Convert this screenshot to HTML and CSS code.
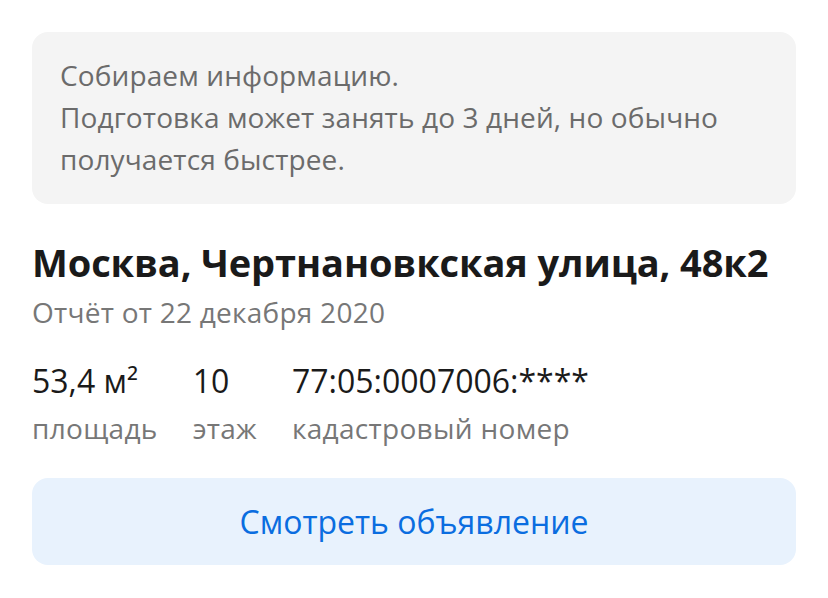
FILE: index.html
```html
<!DOCTYPE html>
<html lang="ru">
<head>
<meta charset="utf-8">
<link rel="stylesheet" href="styles.css">
</head>
<body>
<div class="page">
  <div class="notice">
    <p>Собираем информацию.<br>Подготовка может занять до 3 дней, но обычно получается быстрее.</p>
  </div>
  <h1 class="title">Москва, Чертнановкская улица, 48к2</h1>
  <div class="date">Отчёт от 22 декабря 2020</div>
  <div class="stats">
    <div class="stat"><div class="value">53,4 м²</div><div class="label">площадь</div></div>
    <div class="stat"><div class="value">10</div><div class="label">этаж</div></div>
    <div class="stat"><div class="value">77:05:0007006:****</div><div class="label">кадастровый номер</div></div>
  </div>
  <button class="btn">Смотреть объявление</button>
</div>
</body>
</html>
```
FILE: styles.css
```css
* { box-sizing: border-box; }
html, body { margin: 0; padding: 0; background: #fff; }
body { font-family: "Open Sans", "Noto Sans", sans-serif; }
.page { padding: 32px; width: 828px; }
.notice {
  background: #f4f4f4;
  border-radius: 16px;
  padding: 22px 28px 23px;
  height: 172px;
}
.notice p {
  margin: 0;
  font-size: 28px;
  line-height: 42px;
  letter-spacing: 0.12px;
  color: #6b6b6b;
  width: 710px;
}
.title {
  margin: 34px 0 0;
  font-size: 38px;
  line-height: 48px;
  font-weight: 700;
  letter-spacing: -0.1px;
  color: #1a1a1a;
}
.date {
  margin-top: 8px;
  font-size: 28px;
  line-height: 36px;
  letter-spacing: 0.25px;
  color: #777;
}
.stats {
  display: flex;
  gap: 35px;
  margin-top: 31px;
}
.value { font-size: 32px; line-height: 40px; color: #1a1a1a; }
.label { font-size: 28px; line-height: 40px; letter-spacing: 0.3px; color: #777; margin-top: 7px; }
.btn {
  display: block;
  width: 100%;
  margin-top: 30px;
  height: 87px;
  border: 0;
  border-radius: 16px;
  background: #e8f2fd;
  color: #0a6de0;
  font-family: inherit;
  font-size: 32px;
}
```
